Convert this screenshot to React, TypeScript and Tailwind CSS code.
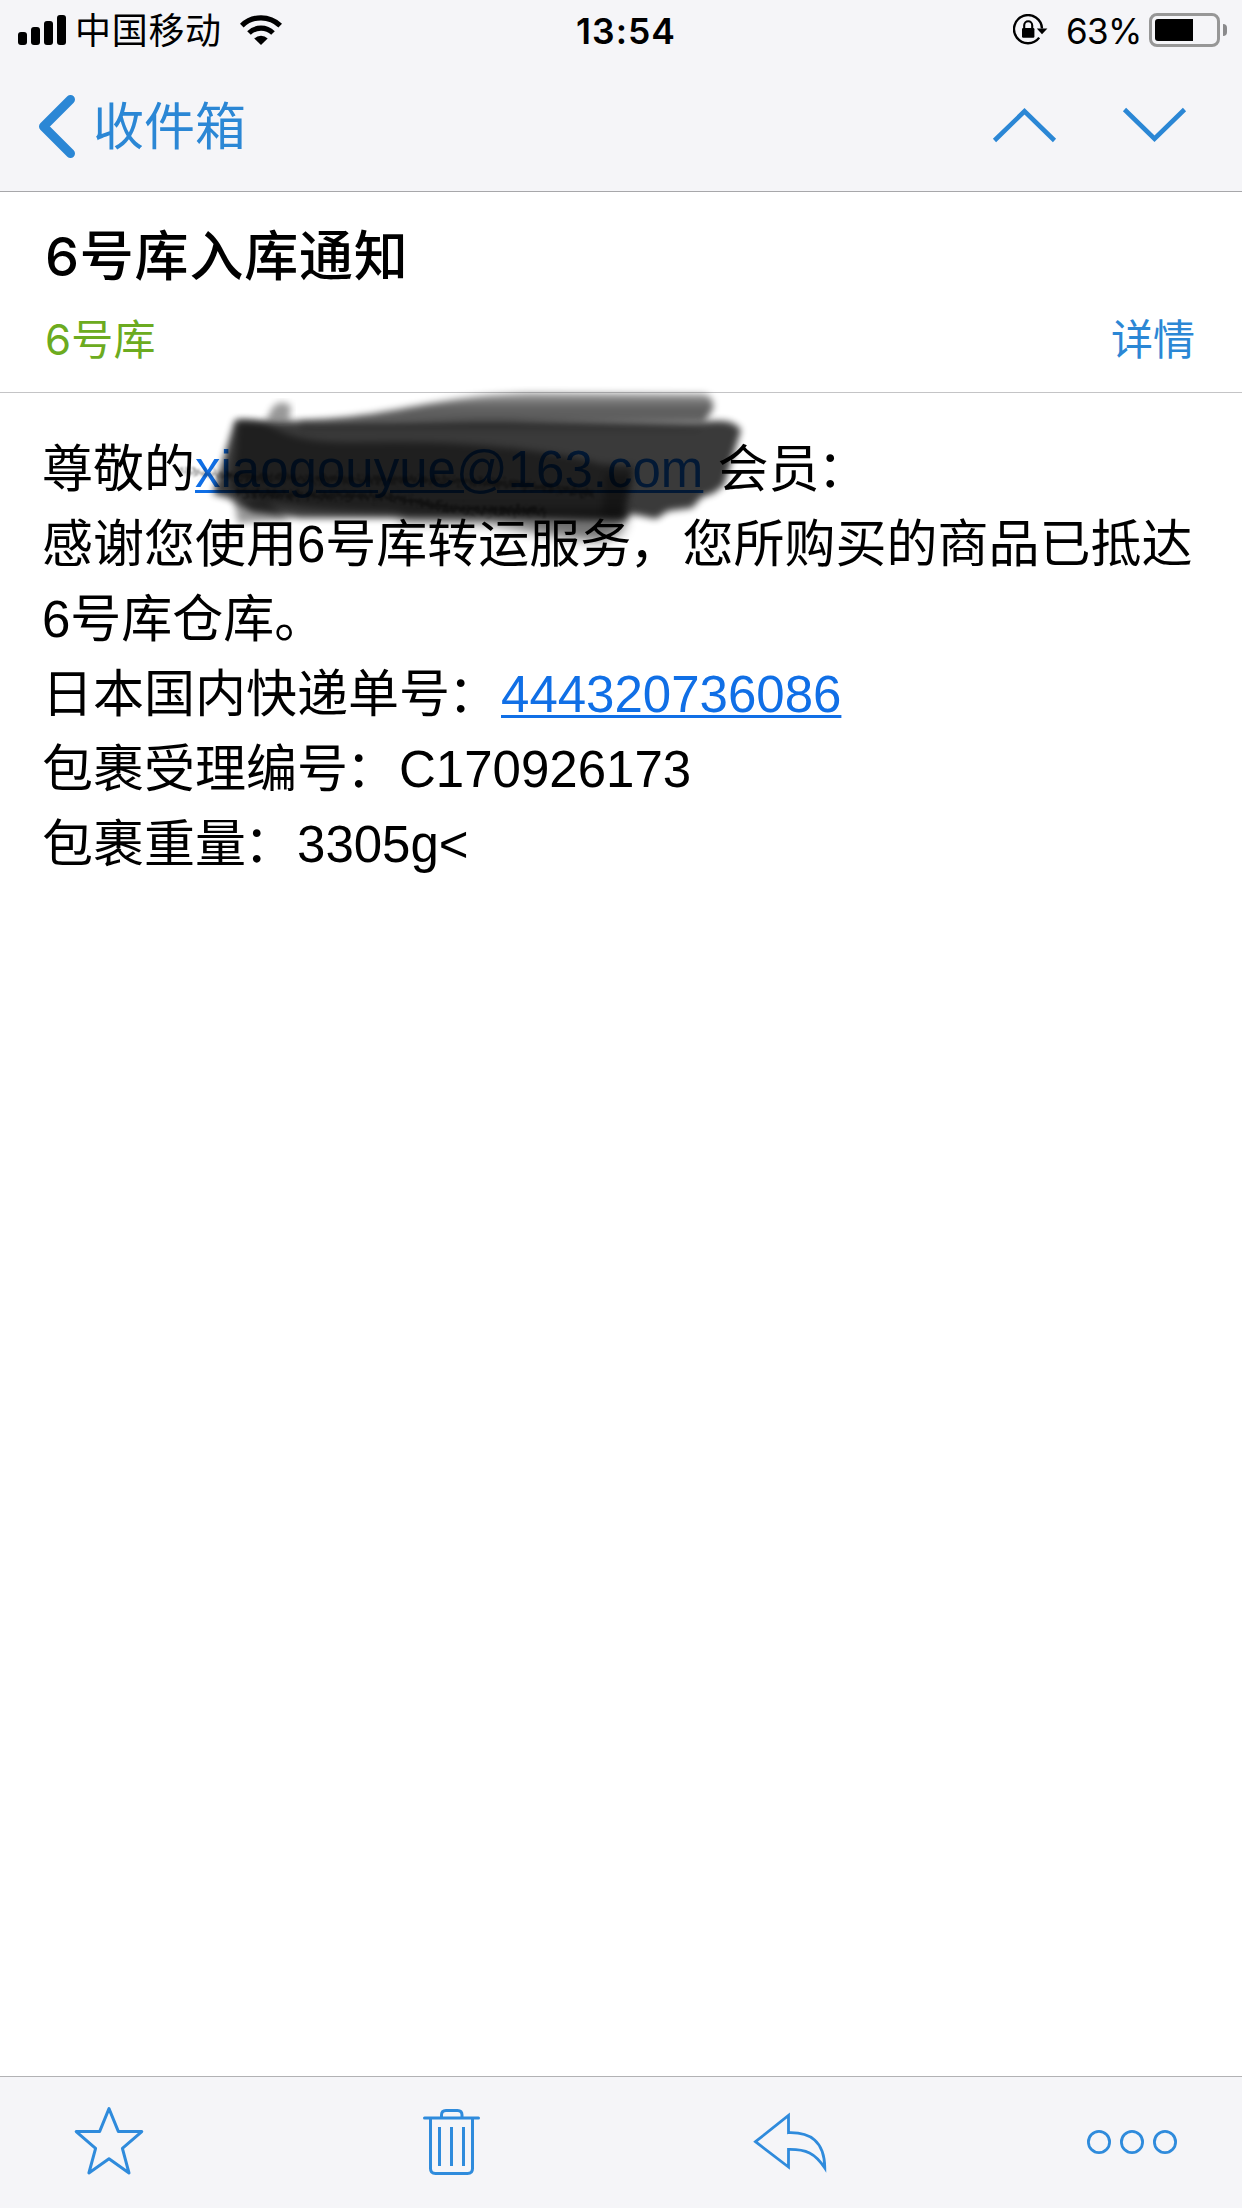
import type { ReactNode } from "react";

const CJK = "font-['Liberation_Sans','Noto_Sans_CJK_SC',sans-serif]";
const UI = "font-['Inter','Noto_Sans_CJK_SC',sans-serif]";

function SignalBars() {
  return (
    <div className="flex h-[30px] items-end gap-1">
      <span className="h-[13px] w-[9px] rounded-[3px] bg-black" />
      <span className="h-[18px] w-[9px] rounded-[3px] bg-black" />
      <span className="h-6 w-[9px] rounded-[3px] bg-black" />
      <span className="h-[30px] w-[9px] rounded-[3px] bg-black" />
    </div>
  );
}

function WifiIcon() {
  return (
    <svg width="42" height="30" viewBox="0 0 42 30" fill="none" stroke="#000">
      <path d="M1.8 10.6A27.5 27.5 0 0 1 40.2 10.6" strokeWidth="5.2" />
      <path d="M9 18A17.3 17.3 0 0 1 33 18" strokeWidth="5.2" />
      <path d="M21 30L14.3 23.4A9.6 9.6 0 0 1 27.7 23.4Z" fill="#000" stroke="none" />
    </svg>
  );
}

function RotationLockIcon() {
  return (
    <svg width="36" height="32" viewBox="0 0 36 32" fill="none" stroke="#000">
      <path d="M26.2 23.6A14 14 0 1 1 29 14.5" strokeWidth="2.4" />
      <path d="M23.8 14.4H34.4L29 20.2Z" fill="#000" stroke="none" />
      <rect x="9" y="14" width="12.4" height="9.8" rx="1.2" fill="#000" stroke="none" />
      <path d="M11.2 15V11.2a4 4 0 0 1 8 0V15" strokeWidth="2.1" />
    </svg>
  );
}

function Battery() {
  return (
    <div className="flex items-center">
      <div className="h-[34px] w-[71px] rounded-[8px] border-[3px] border-[#979797] p-[3px]">
        <div className="h-full w-[38px] rounded-l-[3px] bg-black" />
      </div>
      <div className="ml-[3px] h-3 w-1 rounded-r-full bg-[#8a8a8c]" />
    </div>
  );
}

function StatusBar() {
  return (
    <div className="relative flex h-15 items-center justify-between pr-[15px] pl-[18px] text-black">
      <div className="flex items-center">
        <SignalBars />
        <span className={`${UI} ml-[9px] pt-[2px] text-[36px] leading-[40px] tracking-[0.7px]`}>中国移动</span>
        <div className="ml-[18px]">
          <WifiIcon />
        </div>
      </div>
      <div className={`${UI} absolute inset-x-0 top-[8px] pl-[10px] text-center text-[35.5px] leading-[48px] font-semibold tracking-[1px]`}>
        13:54
      </div>
      <div className="flex items-center">
        <RotationLockIcon />
        <span className={`${UI} ml-[17px] w-[83px] pt-[2px] text-[35px] leading-[48px] tracking-[-0.6px]`}>63%</span>
        <Battery />
      </div>
    </div>
  );
}

function NavBar() {
  return (
    <div className="flex h-[131px] items-center justify-between pr-[54px] pl-[36px] text-[#2b87d5]">
      <div className="flex items-center">
        <svg width="42" height="66" viewBox="36 93 42 66" fill="none" stroke="currentColor" strokeWidth="9" strokeLinecap="round" strokeLinejoin="round">
          <path d="M70.5 99.5L43.5 126.500L70.5 153.5" />
        </svg>
        <span className={`${UI} ml-[15px] pt-[2px] text-[51px] leading-[66px]`}>收件箱</span>
      </div>
      <div className="flex gap-[65px] pb-[2px]">
        <svg width="66" height="40" viewBox="991 105 66 40" fill="none" stroke="currentColor" strokeWidth="4.6">
          <path d="M994.5 140.5L1024.5 111.3L1054.5 140.5" />
        </svg>
        <svg width="66" height="40" viewBox="1122 105 66 40" fill="none" stroke="currentColor" strokeWidth="4.6">
          <path d="M1124.5 109.5L1154.5 138.7L1184.5 109.5" />
        </svg>
      </div>
    </div>
  );
}

function MailHeader() {
  return (
    <section className="flex h-[201px] flex-col border-b border-[#c4c4c6] pr-[47px] pl-[45px]">
      <h1 className={`${UI} mt-[32px] text-[54px] leading-[66px] font-medium tracking-[0.8px] text-black`}>6号库入库通知</h1>
      <div className={`${UI} mt-[20px] flex items-center justify-between text-[42px] leading-[60px]`}>
        <span className="tracking-[0.2px] text-[#6cab20]">6号库</span>
        <span className="text-[#2b87d5]">详情</span>
      </div>
    </section>
  );
}

function MailLink({ children }: { children: ReactNode }) {
  return (
    <a className="text-[#106fe6] underline decoration-[3px] underline-offset-[3px]">{children}</a>
  );
}

/* Full-width punctuation, set tight against the character before it. */
function Punct({ children }: { children: ReactNode }) {
  return <span className="inline-block w-[51px] -indent-[2px]">{children}</span>;
}

/* Soft marker strokes laid over the recipient address. */
function MarkerScribble() {
  return (
    <svg className="pointer-events-none absolute -top-[7px] left-[170px]" width="600" height="170" viewBox="170 386 600 170">
      <defs>
        <filter id="soft" x="-20%" y="-20%" width="140%" height="140%">
          <feGaussianBlur stdDeviation="3.5" />
        </filter>
        <filter id="softer" x="-20%" y="-60%" width="140%" height="220%">
          <feGaussianBlur stdDeviation="6" />
        </filter>
        <filter id="rough" x="-10%" y="-100%" width="120%" height="300%">
          <feTurbulence type="fractalNoise" baseFrequency="0.3" numOctaves="2" seed="4" result="n" />
          <feDisplacementMap in="SourceGraphic" in2="n" scale="18" />
          <feGaussianBlur stdDeviation="1" />
        </filter>
        <linearGradient id="band" x1="0" y1="392" x2="0" y2="426" gradientUnits="userSpaceOnUse">
          <stop offset="0" stopColor="#000" stopOpacity="0.35" />
          <stop offset="0.45" stopColor="#000" stopOpacity="0.62" />
          <stop offset="0.8" stopColor="#000" stopOpacity="0.64" />
          <stop offset="1" stopColor="#000" stopOpacity="0.1" />
        </linearGradient>
      </defs>
      <path d="M300 421C400 416 430 396 530 393L704 394Q715 397 713 409L698 432H300Z" fill="url(#band)" filter="url(#soft)" />
      <path d="M272 408Q280 398 291 406L289 421H266Z" fill="#000" opacity="0.4" filter="url(#soft)" />
      <path d="M235 420C340 423 440 419 520 420L698 423Q732 416 741 430L724 485L714 493L702 497L692 508L668 511L656 519L632 514L624 520L560 518H300L252 512L228 498L213 494L226 450Z" fill="#000" opacity="0.77" filter="url(#soft)" />
      <path d="M238 420Q256 418 278 430C310 446 350 442 400 442C480 442 560 452 600 464L634 466L624 520H560L460 512C400 512 300 512 250 498L230 490L236 450Z" fill="#000" opacity="0.46" filter="url(#soft)" />
      <path d="M234 500L266 500L290 520L238 523Z" fill="#000" opacity="0.4" filter="url(#soft)" />
      <path d="M400 512H628L622 532L604 541C570 541 530 531 490 524L400 522Z" fill="#000" opacity="0.55" filter="url(#softer)" />
      <path d="M606 474H632L622 514H602Z" fill="#000" opacity="0.28" filter="url(#soft)" />
      <g fill="none" stroke="#000" filter="url(#rough)">
        <path d="M180 471L236 476" strokeWidth="5" opacity="0.3" />
        <path d="M228 476C340 484 460 472 595 494" strokeWidth="6" opacity="0.35" />
        <path d="M236 492C330 500 390 490 430 505C480 514 520 509 546 511" strokeWidth="6" opacity="0.4" />
      </g>
    </svg>
  );
}

function MailBody() {
  return (
    <section className="relative h-[1683px]">
      <div className={`${CJK} pt-[39px] pl-[42px] text-[51px] leading-[75px] whitespace-nowrap text-black`}>
        <p>尊敬的<MailLink>xiaogouyue@163.com</MailLink> 会员<Punct>：</Punct></p>
        <p>感谢您使用6号库转运服务<Punct>，</Punct>您所购买的商品已抵达</p>
        <p>6号库仓库。</p>
        <p>日本国内快递单号<Punct>：</Punct><MailLink>444320736086</MailLink></p>
        <p>包裹受理编号<Punct>：</Punct>C170926173</p>
        <p>包裹重量<Punct>：</Punct>3305g&lt;</p>
      </div>
      <MarkerScribble />
    </section>
  );
}

function Toolbar() {
  return (
    <footer className="flex h-[132px] items-center border-t border-[#b2b2b4] bg-[#f5f5f8] pb-[2px] pl-[72px] text-[#2f8bdc]">
      <svg width="74" height="74" viewBox="72 2105 74 74" fill="none" stroke="currentColor" strokeWidth="3" strokeLinejoin="round">
        <path d="M109 2108.6L118.3 2131.4L141.8 2131.6L122.4 2148.4L129 2173L109 2158.8L88.9 2173L95.6 2148.4L76.2 2131.6L99.7 2131.4Z" />
      </svg>
      <svg className="ml-[275px]" width="60" height="74" viewBox="421 2105 60 74" fill="none" stroke="currentColor" strokeWidth="3">
        <path d="M424.5 2118H478.500" strokeLinecap="round" />
        <path d="M441.500 2118V2115Q441.500 2110.500 446 2110.500H457.500Q462 2110.500 462 2115V2118" />
        <path d="M430.500 2118V2168.500Q430.500 2173.500 435.500 2173.500H467.500Q472.500 2173.500 472.500 2168.500V2118" />
        <path d="M439.500 2127V2166M451.500 2127V2166M463.500 2127V2166" />
      </svg>
      <svg className="ml-[271px]" width="76" height="74" viewBox="752 2105 76 74" fill="none" stroke="currentColor" strokeWidth="2.800">
        <path d="M755.500 2141.700L788.500 2115.500V2132.700C810 2132 824.500 2141 824.800 2168C815 2153 806 2149 788.500 2149.300V2167Z" />
      </svg>
      <svg className="ml-[258px]" width="94" height="74" viewBox="1086 2105 94 74" fill="none" stroke="currentColor" strokeWidth="2.800">
        <circle cx="1099" cy="2142" r="10.600" />
        <circle cx="1132" cy="2142" r="10.600" />
        <circle cx="1165" cy="2142" r="10.600" />
      </svg>
    </footer>
  );
}

export default function App() {
  return (
    <main className="flex h-[2208px] w-[1242px] flex-col overflow-hidden bg-white">
      <header className="h-[192px] border-b border-[#a7a7aa] bg-[#f5f5f8]">
        <StatusBar />
        <NavBar />
      </header>
      <MailHeader />
      <MailBody />
      <Toolbar />
    </main>
  );
}
